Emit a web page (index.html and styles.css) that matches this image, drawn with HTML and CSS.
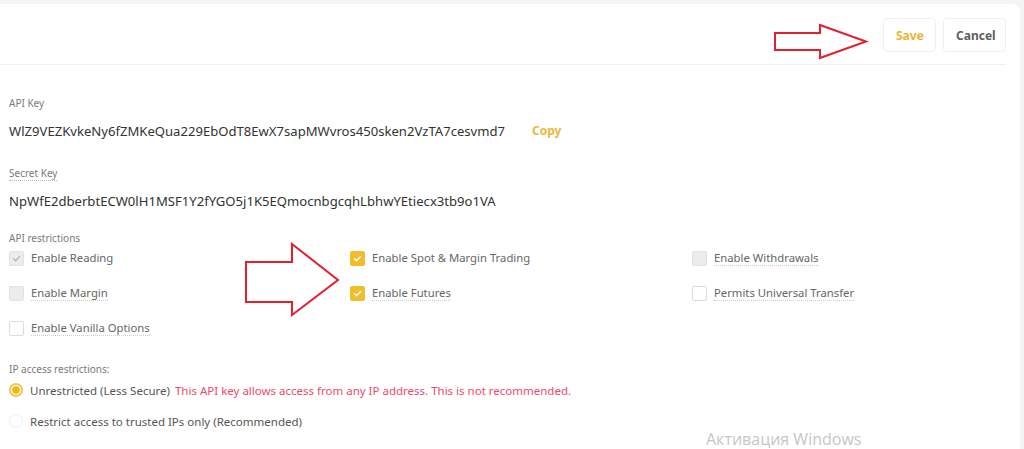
FILE: index.html
```html
<!DOCTYPE html>
<html lang="en">
<head>
  <meta charset="UTF-8">
  <title>API Management</title>
  <link rel="stylesheet" href="styles.css">
</head>
<body>

  <div class="card">
    <div class="header">
      <button class="btn save">Save</button>
      <button class="btn cancel">Cancel</button>
      <svg class="arrow arrow-top" width="100" height="40" viewBox="0 0 100 40">
        <polygon points="2,11 47,11 47,3 93,19.5 47,36 47,28 2,28" fill="none" stroke="#e3202b" stroke-width="2"/>
      </svg>
    </div>

    <div class="content">
      <div class="label key-label">API Key</div>
      <div class="value-row">
        <span class="value">WlZ9VEZKvkeNy6fZMKeQua229EbOdT8EwX7sapMWvros450sken2VzTA7cesvmd7</span>
        <span class="copy">Copy</span>
      </div>

      <div class="label dotted">Secret Key</div>
      <div class="value-row secret">
        <span class="value">NpWfE2dberbtECW0lH1MSF1Y2fYGO5j1K5EQmocnbgcqhLbhwYEtiecx3tb9o1VA</span>
      </div>

      <div class="label small-gap">API restrictions</div>
      <div class="perms">
        <svg class="arrow arrow-mid" width="100" height="80" viewBox="0 0 100 80">
          <polygon points="2,21 48,21 48,3 94,39 48,74 48,61 2,61" fill="none" stroke="#e3202b" stroke-width="2"/>
        </svg>

        <div class="perm">
          <span class="box disabled-check"><svg viewBox="0 0 13 13"><path d="M3.5 6.8 L5.6 8.7 L9.5 4.5" /></svg></span>
          <span class="perm-text plain">Enable Reading</span>
        </div>
        <div class="perm">
          <span class="box checked"><svg viewBox="0 0 13 13"><path d="M3.5 6.8 L5.6 8.7 L9.5 4.5" /></svg></span>
          <span class="perm-text plain">Enable Spot &amp; Margin Trading</span>
        </div>
        <div class="perm">
          <span class="box grey"></span>
          <span class="perm-text">Enable Withdrawals</span>
        </div>

        <div class="perm">
          <span class="box grey"></span>
          <span class="perm-text">Enable Margin</span>
        </div>
        <div class="perm">
          <span class="box checked"><svg viewBox="0 0 13 13"><path d="M3.5 6.8 L5.6 8.7 L9.5 4.5" /></svg></span>
          <span class="perm-text">Enable Futures</span>
        </div>
        <div class="perm">
          <span class="box"></span>
          <span class="perm-text">Permits Universal Transfer</span>
        </div>

        <div class="perm">
          <span class="box"></span>
          <span class="perm-text">Enable Vanilla Options</span>
        </div>
      </div>

      <div class="label ip-label">IP access restrictions:</div>
      <div class="radio-row">
        <span class="radio on"></span>
        <span class="radio-text">Unrestricted (Less Secure)</span>
        <span class="warn">This API key allows access from any IP address. This is not recommended.</span>
      </div>
      <div class="radio-row">
        <span class="radio"></span>
        <span class="radio-text">Restrict access to trusted IPs only (Recommended)</span>
      </div>
    </div>

    <div class="watermark">Активация Windows</div>
  </div>

</body>
</html>
```

FILE: styles.css
```css
body {
  margin: 0;
  padding: 4px 4px 0 0;
  background: #f4f4f4;
  font-family: "Noto Sans", "Open Sans", sans-serif;
  color: #333;
  height: 445px;
  overflow: hidden;
}

.card {
  position: relative;
  background: #fff;
  height: 445px;
  border-top-right-radius: 8px;
  padding-right: 14px;
}

.header {
  position: relative;
  display: flex;
  justify-content: flex-end;
  align-items: center;
  gap: 7px;
  height: 61px;
  padding-top: 2px;
  box-sizing: border-box;
  border-bottom: 1px solid #efefef;
}

.btn {
  height: 34px;
  padding: 0 12px;
  background: #fff;
  border: 1px solid #f0f0f0;
  border-radius: 4px;
  font-family: inherit;
  font-size: 12px;
  font-weight: bold;
  cursor: pointer;
}

.save {
  color: #e9b631;
  width: 53px;
}

.cancel {
  color: #606060;
  width: 63px;
}

.arrow {
  position: absolute;
}

.arrow-top {
  left: 773px;
  top: 18px;
}

.arrow-mid {
  left: 235px;
  top: -8px;
}

.content {
  padding-left: 9px;
}

.label {
  font-size: 10px;
  color: #7a7a7a;
  line-height: 14px;
}

.key-label {
  margin-top: 31px;
}

.label.dotted {
  display: inline-block;
  margin-top: 27px;
  border-bottom: 1px dotted #bbb;
  line-height: 12px;
  padding-bottom: 1px;
}

.label.small-gap {
  margin-top: 21px;
}

.value-row {
  display: flex;
  align-items: center;
  margin-top: 12px;
  line-height: 18px;
}

.value-row.secret {
  margin-top: 10px;
}

.value {
  font-size: 13.1px;
  color: #333;
}

.copy {
  margin-left: 27px;
  font-size: 12px;
  font-weight: bold;
  color: #ebb83a;
}

.perms {
  position: relative;
  display: grid;
  grid-template-columns: 341px 342px 1fr;
  row-gap: 17px;
  margin-top: 4px;
}

.perm {
  display: flex;
  align-items: center;
  gap: 7px;
  height: 18px;
}

.box {
  width: 13px;
  height: 13px;
  border: 1px solid #dcdcdc;
  border-radius: 2px;
  background: #fff;
}

.box svg {
  display: block;
  width: 13px;
  height: 13px;
}

.box path {
  fill: none;
  stroke: #fff;
  stroke-width: 1.4;
  stroke-linecap: round;
  stroke-linejoin: round;
}

.box.grey {
  background: #ececec;
  border-color: #e2e2e2;
}

.box.disabled-check {
  background: #ececec;
  border-color: #e2e2e2;
}

.box.disabled-check path {
  stroke: #b8b8b8;
}

.box.checked {
  background: #f1bd2c;
  border-color: #f1bd2c;
}

.perm-text {
  font-size: 11.3px;
  color: #666;
  border-bottom: 1px dotted #ccc;
  line-height: 15px;
}

.perm-text.plain {
  border-bottom-color: transparent;
}

.ip-label {
  margin-top: 25px;
}

.radio-row {
  display: flex;
  align-items: center;
  height: 18px;
  margin-top: 5px;
  font-size: 11.5px;
}

.radio-row + .radio-row {
  margin-top: 13px;
}

.radio {
  box-sizing: border-box;
  width: 14px;
  height: 14px;
  border: 1px solid #eee;
  border-radius: 50%;
  margin-right: 7px;
}

.radio.on {
  border: 2px solid #f3c650;
  background: radial-gradient(circle, #f0b90b 0 3.5px, #fff 4px);
}

.radio-text {
  color: #555;
}

.warn {
  margin-left: 5px;
  color: #f0486e;
}

.watermark {
  position: absolute;
  left: 706px;
  top: 424px;
  font-family: "Open Sans", sans-serif;
  font-size: 16px;
  color: #c6c6c6;
}
```
